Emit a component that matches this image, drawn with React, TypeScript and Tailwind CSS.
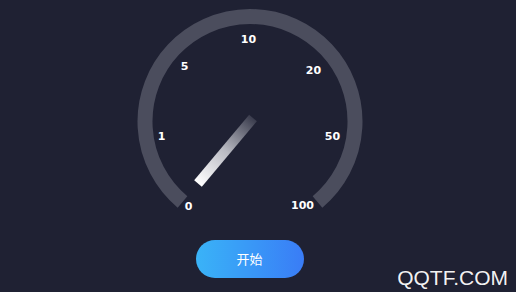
import { useState } from "react";

// Medidor de velocidad: arco de 280°, aguja con degradado y etiquetas de escala.
const CX = 120;
const CY = 121.5;
const R = 105;

function polar(deg: number) {
  // deg medido desde abajo, en sentido horario
  const a = (deg * Math.PI) / 180;
  return { x: CX - R * Math.sin(a), y: CY + R * Math.cos(a) };
}

const ticks = [
  { label: "0", x: 58.5, y: 206 },
  { label: "1", x: 31.5, y: 136 },
  { label: "5", x: 54.5, y: 66 },
  { label: "10", x: 118.5, y: 39 },
  { label: "20", x: 183.5, y: 70 },
  { label: "50", x: 202.5, y: 136 },
  { label: "100", x: 172.5, y: 205 },
];

function Gauge() {
  const start = polar(40);
  const end = polar(320);
  return (
    <svg width="240" height="214" viewBox="0 0 240 214" className="block">
      <defs>
        <linearGradient id="needle" gradientUnits="userSpaceOnUse" x1="68" y1="183.5" x2="123" y2="118">
          <stop offset="0" stopColor="#ffffff" />
          <stop offset="0.5" stopColor="#b9bac2" />
          <stop offset="1" stopColor="#3a3c4d" />
        </linearGradient>
      </defs>
      <path
        d={`M ${start.x} ${start.y} A ${R} ${R} 0 1 1 ${end.x} ${end.y}`}
        fill="none"
        stroke="#4b4d5d"
        strokeWidth="15"
      />
      <line x1="68" y1="183.5" x2="123" y2="118" stroke="url(#needle)" strokeWidth="10" />
      {ticks.map((t) => (
        <text
          key={t.label}
          x={t.x}
          y={t.y}
          textAnchor="middle"
          dominantBaseline="central"
          fill="#ffffff"
          fontSize="11"
          fontWeight="700"
          fontFamily="'DejaVu Sans', sans-serif"
        >
          {t.label}
        </text>
      ))}
    </svg>
  );
}

export default function App() {
  const [running, setRunning] = useState(false);
  return (
    <div className="relative w-[516px] h-[292px] overflow-hidden bg-[#1f2133] font-['Liberation_Sans',sans-serif]">
      <div className="flex flex-col items-center pr-[17px]">
        <Gauge />
        <button
          type="button"
          onClick={() => setRunning(!running)}
          className="mt-[26px] w-[108px] h-[38px] rounded-full bg-gradient-to-r from-[#3ab3f7] to-[#3a7cf6] text-white text-[13px] font-['Noto_Sans_CJK_SC',sans-serif] flex items-center justify-center"
        >
          开始
        </button>
      </div>
      <div className="absolute right-[8px] bottom-[4px] text-[21px] leading-none text-white/95">
        QQTF.COM
      </div>
    </div>
  );
}
